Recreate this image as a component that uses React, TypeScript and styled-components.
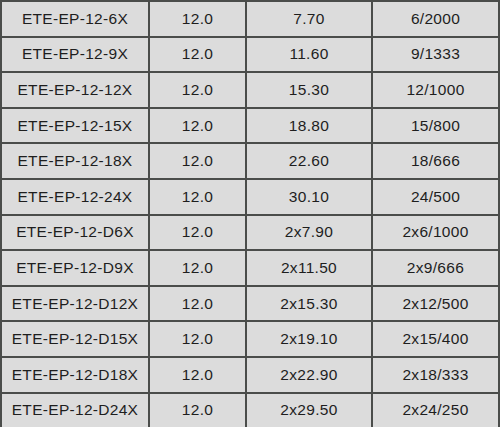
import React from "react";
import styled, { createGlobalStyle } from "styled-components";

// 규격표: 모델명 / 전압 / 용량 / 구성
const rows: [string, string, string, string][] = [
  ["ETE-EP-12-6X", "12.0", "7.70", "6/2000"],
  ["ETE-EP-12-9X", "12.0", "11.60", "9/1333"],
  ["ETE-EP-12-12X", "12.0", "15.30", "12/1000"],
  ["ETE-EP-12-15X", "12.0", "18.80", "15/800"],
  ["ETE-EP-12-18X", "12.0", "22.60", "18/666"],
  ["ETE-EP-12-24X", "12.0", "30.10", "24/500"],
  ["ETE-EP-12-D6X", "12.0", "2x7.90", "2x6/1000"],
  ["ETE-EP-12-D9X", "12.0", "2x11.50", "2x9/666"],
  ["ETE-EP-12-D12X", "12.0", "2x15.30", "2x12/500"],
  ["ETE-EP-12-D15X", "12.0", "2x19.10", "2x15/400"],
  ["ETE-EP-12-D18X", "12.0", "2x22.90", "2x18/333"],
  ["ETE-EP-12-D24X", "12.0", "2x29.50", "2x24/250"],
];

const colWidths = [148, 97, 126, 127];

const GlobalStyle = createGlobalStyle`
  html, body {
    margin: 0;
    padding: 0;
    background: #dcdcdc;
    overflow: hidden;
  }
`;

const Table = styled.table`
  border-collapse: collapse;
  table-layout: fixed;
  width: 498px;
  background: #dcdcdc;
  font-family: "Liberation Sans", Arial, sans-serif;
  font-size: 15.5px;
  color: #1e1e1e;
`;

const Cell = styled.td`
  height: 33.6px;
  padding: 0;
  border: 2px solid #4b4d4b;
  text-align: center;
  vertical-align: middle;
  letter-spacing: 0.3px;
  white-space: nowrap;
`;

export default function App() {
  return (
    <>
      <GlobalStyle />
      <Table>
        <colgroup>
          {colWidths.map((w, i) => (
            <col key={i} style={{ width: w }} />
          ))}
        </colgroup>
        <tbody>
          {rows.map((row) => (
            <tr key={row[0]}>
              {row.map((value, i) => (
                <Cell key={i}>{value}</Cell>
              ))}
            </tr>
          ))}
        </tbody>
      </Table>
    </>
  );
}
